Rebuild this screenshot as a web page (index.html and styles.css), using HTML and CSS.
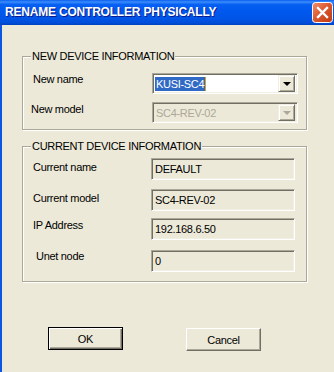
FILE: index.html
```html
<!DOCTYPE html>
<html>
<head>
<meta charset="utf-8">
<link rel="stylesheet" href="styles.css">
</head>
<body>
<div class="window">
  <div class="titlebar">
    <span class="title">RENAME CONTROLLER PHYSICALLY</span>
    <span class="close">
      <svg width="21" height="21" viewBox="0 0 21 21">
        <defs>
          <linearGradient id="cg" x1="0" y1="0" x2="1" y2="1">
            <stop offset="0" stop-color="#F0906C"/>
            <stop offset="0.5" stop-color="#D9552C"/>
            <stop offset="1" stop-color="#C13A10"/>
          </linearGradient>
        </defs>
        <rect x="0.5" y="0.5" width="20" height="20" rx="3" ry="3" fill="url(#cg)" stroke="#ffffff" stroke-width="1"/>
        <path d="M6 6 L15 15 M15 6 L6 15" stroke="#ffffff" stroke-width="2.4" stroke-linecap="square"/>
      </svg>
    </span>
  </div>
  <div class="client">
    <div class="group g1">
      <div class="legend">NEW DEVICE INFORMATION</div>
      <div class="row r1">
        <span class="label l-newname">New name</span>
        <div class="combo">
          <span class="combo-text"><span class="sel">KUSI-SC4</span><span class="caret"></span></span>
          <span class="drop"><span class="arrow"></span></span>
        </div>
      </div>
      <div class="row r2">
        <span class="label l-newmodel">New model</span>
        <div class="combo disabled">
          <span class="combo-text">SC4-REV-02</span>
          <span class="drop"><span class="arrow"></span></span>
        </div>
      </div>
    </div>
    <div class="group g2">
      <div class="legend">CURRENT DEVICE INFORMATION</div>
      <div class="row f1">
        <span class="label l-curname">Current name</span>
        <div class="field">DEFAULT</div>
      </div>
      <div class="row f2">
        <span class="label l-curmodel">Current model</span>
        <div class="field">SC4-REV-02</div>
      </div>
      <div class="row f3">
        <span class="label l-ip">IP Address</span>
        <div class="field">192.168.6.50</div>
      </div>
      <div class="row f4">
        <span class="label l-unet">Unet node</span>
        <div class="field">0</div>
      </div>
    </div>
    <div class="buttons">
      <button class="btn default">OK</button>
      <button class="btn cancel">Cancel</button>
    </div>
  </div>
</div>
</body>
</html>
```
FILE: styles.css
```css
html, body {
  margin: 0;
  padding: 0;
}
body {
  width: 334px;
  height: 372px;
  overflow: hidden;
  background: #ECE9D8;
  font-family: "Liberation Sans", Arial, sans-serif;
  font-size: 11px;
  letter-spacing: -0.3px;
  color: #000;
}
.window {
  width: 334px;
  height: 372px;
  border-left: 2px solid #0A56E0;
  box-sizing: border-box;
  background: #ECE9D8;
}
.titlebar {
  height: 25px;
  display: flex;
  align-items: center;
  justify-content: space-between;
  background: linear-gradient(to bottom, #0A5FEF 0%, #3A8CFB 8%, #0660F2 18%, #0058EE 45%, #0054E6 75%, #004DD8 92%, #0041C0 100%);
  margin-left: -2px;
}
.title {
  padding-left: 5px;
  color: #fff;
  font-weight: bold;
  font-size: 12px;
  letter-spacing: -0.2px;
  text-shadow: 1px 1px 0 #0A1C8C;
  line-height: 25px;
}
.close {
  display: flex;
  width: 21px;
  height: 21px;
  margin-right: 1px;
}
.client {
  padding: 31px 0 0 20px;
}
.group {
  width: 285px;
  box-sizing: border-box;
  border: 1px solid #ACA899;
  box-shadow: inset 1px 1px 0 #fff, 1px 1px 0 #fff;
}
.g1 {
  padding-bottom: 6px;
}
.g2 {
  margin-top: 16px;
  padding-bottom: 9px;
}
.legend {
  width: fit-content;
  margin: -7px 0 0 8px;
  padding: 0 1px;
  line-height: 13px;
  height: 13px;
  background: #ECE9D8;
}
.row {
  display: flex;
  align-items: flex-start;
  padding-left: 10px;
}
.r1 { margin-top: 10px; }
.r2 { margin-top: 8px; }
.f1 { margin-top: 5px; }
.f2 { margin-top: 9px; }
.f3 { margin-top: 7px; }
.f4 { margin-top: 10px; }
.label {
  line-height: 13px;
  flex: none;
}
.g1 .label { width: 119px; }
.g2 .label { width: 118px; }
.l-newname { margin-top: 0px; }
.l-newmodel { margin-top: 1px; margin-left: -2px; padding-right: 2px; }
.l-curname { margin-top: 3px; }
.l-curmodel { margin-top: 3px; }
.l-ip { margin-top: 1px; }
.l-unet { margin-top: 0px; padding-left: 3px; width: 115px !important; }

.combo {
  width: 146px;
  height: 21px;
  box-sizing: border-box;
  display: flex;
  align-items: center;
  justify-content: space-between;
  background: #fff;
  border-top: 1px solid #ACA899;
  border-left: 1px solid #ACA899;
  border-bottom: 1px solid #fff;
  border-right: 1px solid #fff;
  box-shadow: inset 1px 1px 0 #716F64, inset -1px -1px 0 #F1EFE2;
  padding: 2px 2px 2px 2px;
}
.combo-text {
  display: flex;
  align-items: center;
  height: 14px;
  line-height: 14px;
  padding-left: 0px;
}
.sel {
  background: #316AC5;
  color: #fff;
  padding: 0 1px;
  height: 14px;
}
.caret {
  width: 1px;
  height: 14px;
  background: #E8A000;
}
.drop {
  width: 17px;
  height: 17px;
  box-sizing: border-box;
  display: flex;
  align-items: center;
  justify-content: center;
  background: #ECE9D8;
  border-top: 1px solid #F1EFE2;
  border-left: 1px solid #F1EFE2;
  border-bottom: 1px solid #716F64;
  border-right: 1px solid #716F64;
  box-shadow: inset 1px 1px 0 #fff, inset -1px -1px 0 #ACA899;
}
.arrow {
  width: 0;
  height: 0;
  border-left: 4px solid transparent;
  border-right: 4px solid transparent;
  border-top: 4px solid #000;
  margin-top: 1px;
}
.combo.disabled {
  background: #ECE9D8;
  color: #ACA899;
}
.combo.disabled .combo-text {
  padding-left: 1px;
}
.combo.disabled .arrow {
  border-top-color: #ACA899;
}
.field {
  width: 144px;
  height: 22px;
  box-sizing: border-box;
  border-top: 1px solid #ACA899;
  border-left: 1px solid #ACA899;
  border-bottom: 1px solid #fff;
  border-right: 1px solid #fff;
  box-shadow: inset 1px 1px 0 #716F64, inset -1px -1px 0 #F1EFE2;
  padding: 3px 0 0 3px;
  line-height: 14px;
}
.buttons {
  display: flex;
  margin-top: 45px;
  padding-left: 26px;
  gap: 63px;
  align-items: flex-start;
}
.btn {
  width: 75px;
  height: 23px;
  box-sizing: border-box;
  margin: 0;
  padding: 0;
  font-family: "Liberation Sans", Arial, sans-serif;
  font-size: 11px;
  letter-spacing: -0.3px;
  color: #000;
  background: #ECE9D8;
  border-top: 1px solid #fff;
  border-left: 1px solid #fff;
  border-bottom: 1px solid #716F64;
  border-right: 1px solid #716F64;
  box-shadow: inset -1px -1px 0 #ACA899;
}
.btn.default {
  border: 1px solid #000;
  box-shadow: inset 1px 1px 0 #fff, inset -1px -1px 0 #716F64, inset -2px -2px 0 #ACA899;
}
.btn.cancel {
  margin-top: 1px;
}
```
